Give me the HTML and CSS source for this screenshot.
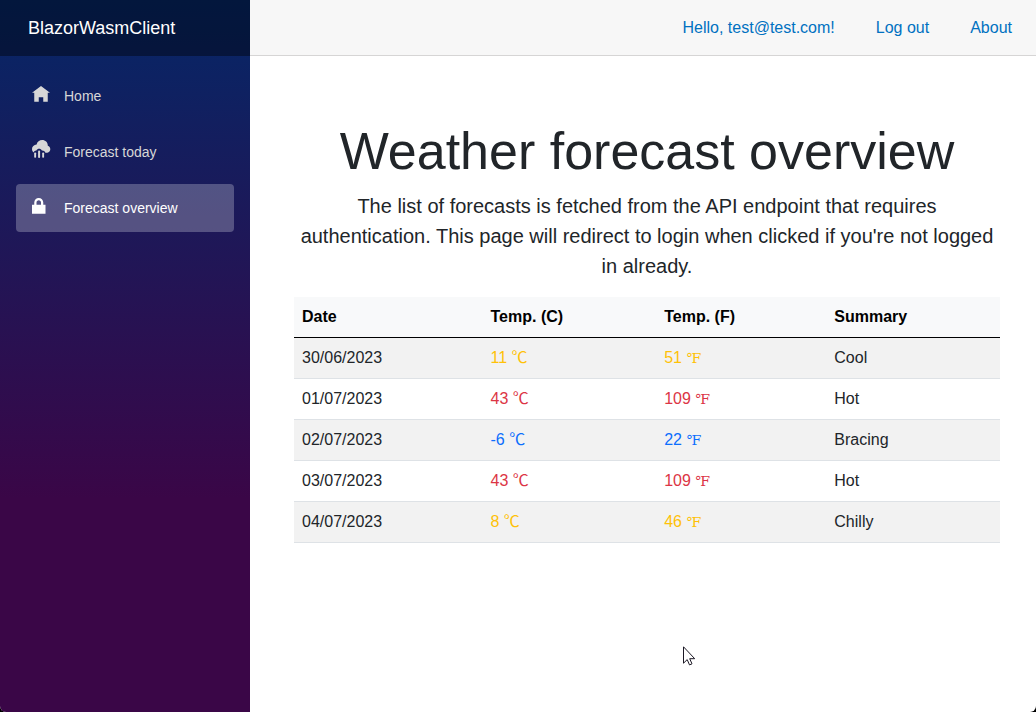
FILE: index.html
```html
<!DOCTYPE html>
<html lang="en">
<head>
<meta charset="utf-8">
<title>BlazorWasmClient</title>
<link rel="stylesheet" href="styles.css">
</head>
<body>
<div class="page">
  <div class="sidebar">
    <div class="brand-row"><a class="brand" href="#">BlazorWasmClient</a></div>
    <nav class="menu">
      <a class="nav-link" href="#">
        <svg class="icon" viewBox="0 0 8 8" aria-hidden="true"><path d="M4 0l-4 3h1v4h2v-2h2v2h2v-4.030l1 .030-4-3z"/></svg>
        Home
      </a>
      <a class="nav-link" href="#">
        <svg class="icon" viewBox="0 2 18 18" aria-hidden="true"><path d="M10.200 0C7.500 0 5.200 1.800 4.600 4.400 2 4.500 0 6.500 0 9c0 1.500.6 2.700 1.600 3.600C2 11 3.200 10.300 4.400 10.400 5 9.300 6 8.800 7.100 8.800c1.200 0 2.200.6 2.800 1.600 1.500-.1 2.900.6 3.500 2.300h2c1.600-.3 2.900-1.600 2.900-3.400 0-1.700-1-3-2.500-3.500V5.400C15.800 2.400 13.300 0 10.200 0z"/><rect x="2.200" y="12.400" width="1.900" height="5.300" rx=".8"/><rect x="6.100" y="10.600" width="2" height="7.400" rx=".9"/><rect x="10.200" y="12.400" width="1.900" height="5.300" rx=".8"/></svg>
        Forecast today
      </a>
      <a class="nav-link active" href="#" aria-current="page">
        <svg class="icon" viewBox="0 0 8 8" aria-hidden="true"><path d="M3 0c-1.100 0-2 .900-2 2v1h-1v4h6v-4h-1v-1c0-1.100-.900-2-2-2zm0 1c.560 0 1 .440 1 1v1h-2v-1c0-.560.440-1 1-1z"/></svg>
        Forecast overview
      </a>
    </nav>
  </div>
  <main class="main">
    <header class="top-row">
      <a href="#">Hello, test@test.com!</a>
      <a href="#">Log out</a>
      <a href="#">About</a>
    </header>
    <article class="content">
      <h1 class="title">Weather forecast overview</h1>
      <p class="lead">The list of forecasts is fetched from the API endpoint that requires authentication. This page will redirect to login when clicked if you're not logged in already.</p>
      <table class="table">
        <thead>
          <tr><th class="col-date" scope="col">Date</th><th class="col-c" scope="col">Temp. (C)</th><th class="col-f" scope="col">Temp. (F)</th><th scope="col">Summary</th></tr>
        </thead>
        <tbody>
          <tr><td>30/06/2023</td><td class="warm">11 ℃</td><td class="warm">51 <span class="unit-f">℉</span></td><td>Cool</td></tr>
          <tr><td>01/07/2023</td><td class="hot">43 ℃</td><td class="hot">109 <span class="unit-f">℉</span></td><td>Hot</td></tr>
          <tr><td>02/07/2023</td><td class="cold">-6 ℃</td><td class="cold">22 <span class="unit-f">℉</span></td><td>Bracing</td></tr>
          <tr><td>03/07/2023</td><td class="hot">43 ℃</td><td class="hot">109 <span class="unit-f">℉</span></td><td>Hot</td></tr>
          <tr><td>04/07/2023</td><td class="warm">8 ℃</td><td class="warm">46 <span class="unit-f">℉</span></td><td>Chilly</td></tr>
        </tbody>
      </table>
    </article>
  </main>
</div>
<svg class="cursor" viewBox="0 0 12 20" aria-hidden="true"><path d="M.5 .8v16.400l3.700-3.600 2.300 5.300 2.500-1.100-2.300-5.100h5z" fill="#fff" stroke="#1b1824"/></svg>
</body>
</html>
```
FILE: styles.css
```css
* {
  box-sizing: border-box;
}

html {
  background: #000;
}

body {
  margin: 0;
  color: #212529;
  font: 16px/24px "Liberation Sans", "Noto Sans CJK SC", sans-serif;
}

a {
  text-decoration: none;
}

.page {
  display: flex;
  min-height: 100vh;
  background: #fff;
  border-radius: 0 0 6px 6px;
  overflow: hidden;
}

.sidebar {
  flex: 0 0 250px;
  background: linear-gradient(180deg, #052767 0%, #3a0647 70%);
}

.brand-row {
  display: flex;
  align-items: center;
  height: 56px;
  padding: 0 28px;
  background: rgba(0, 0, 0, 0.4);
}

.brand {
  color: #fff;
  font-size: 18px;
}

.menu {
  display: flex;
  flex-direction: column;
  gap: 8px;
  padding: 16px;
}

.nav-link {
  display: flex;
  align-items: center;
  gap: 14px;
  height: 48px;
  padding: 0 16px;
  border-radius: 4px;
  color: #d7d7d7;
  font-size: 14px;
}

.nav-link.active {
  background: rgba(255, 255, 255, 0.25);
  color: #fff;
}

.icon {
  width: 18px;
  height: 18px;
  margin-bottom: 2px;
  fill: currentColor;
  overflow: visible;
}

.main {
  flex: 1;
  min-width: 0;
}

.top-row {
  display: flex;
  align-items: center;
  justify-content: flex-end;
  gap: 41px;
  height: 56px;
  padding: 0 24px;
  background: #f7f7f7;
  border-bottom: 1px solid #d6d5d5;
}

.top-row a {
  color: #0071c1;
}

.content {
  padding: 64px 36px 0 44px;
}

.title {
  margin: 0 0 8px;
  font-size: 52px;
  font-weight: 400;
  line-height: 63px;
  text-align: center;
}

.lead {
  margin: 0 0 16px;
  font-size: 20px;
  line-height: 30px;
  text-align: center;
}

.table {
  width: 100%;
  table-layout: fixed;
  border-collapse: collapse;
  text-align: left;
}

.table th,
.table td {
  padding: 8px;
  border-bottom: 1px solid #dee2e6;
  line-height: 24px;
}

.table th {
  background: #f8f9fa;
  border-bottom-color: #000;
  color: #000;
}

.table tbody tr:nth-child(odd) {
  background: #f2f2f2;
}

.col-date {
  width: 26.7%;
}

.col-c {
  width: 24.6%;
}

.col-f {
  width: 24.1%;
}

.table .warm {
  color: #ffc107;
}

.table .hot {
  color: #dc3545;
}

.table .cold {
  color: #0d6efd;
}

.unit-f {
  font-family: "Liberation Serif", "DejaVu Serif", serif;
  font-size: 14px;
  line-height: 1;
}

.cursor {
  position: absolute;
  left: 683px;
  top: 646px;
  width: 12px;
  height: 20px;
}
```
